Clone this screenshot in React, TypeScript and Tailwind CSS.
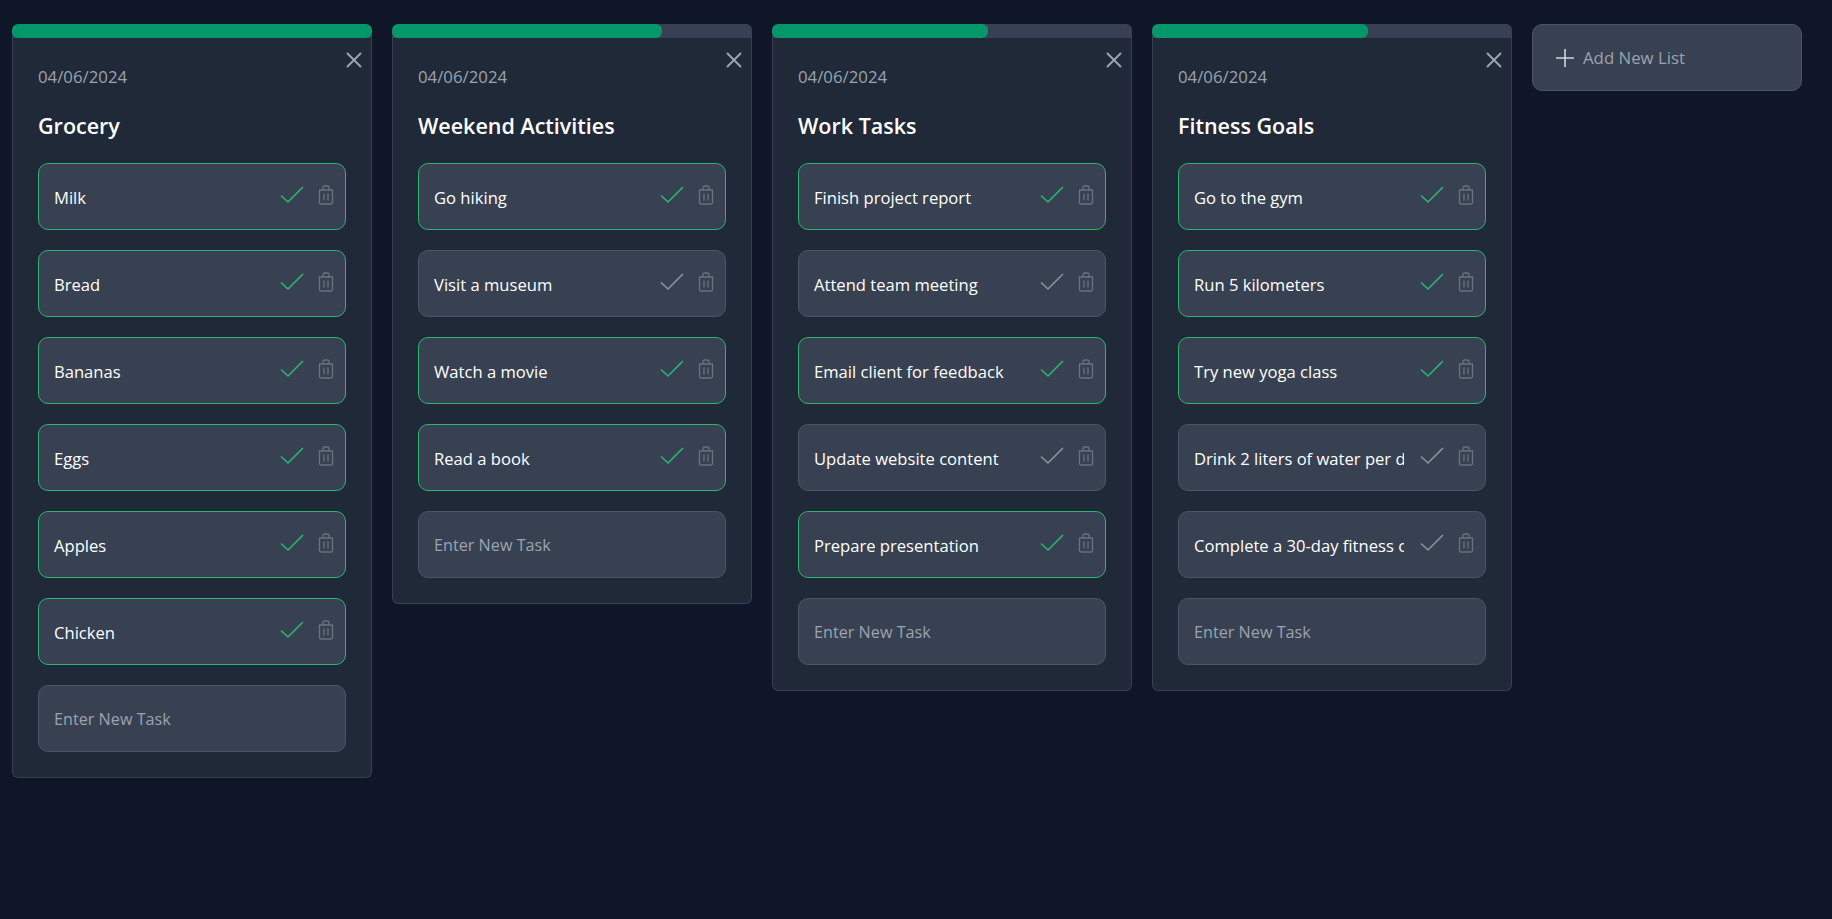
import { useState } from 'react'

type Task = { text: string; done: boolean }
type List = { title: string; progress: number; tasks: Task[] }

const lists: List[] = [
  {
    title: 'Grocery',
    progress: 100,
    tasks: [
      { text: 'Milk', done: true },
      { text: 'Bread', done: true },
      { text: 'Bananas', done: true },
      { text: 'Eggs', done: true },
      { text: 'Apples', done: true },
      { text: 'Chicken', done: true },
    ],
  },
  {
    title: 'Weekend Activities',
    progress: 75,
    tasks: [
      { text: 'Go hiking', done: true },
      { text: 'Visit a museum', done: false },
      { text: 'Watch a movie', done: true },
      { text: 'Read a book', done: true },
    ],
  },
  {
    title: 'Work Tasks',
    progress: 60,
    tasks: [
      { text: 'Finish project report', done: true },
      { text: 'Attend team meeting', done: false },
      { text: 'Email client for feedback', done: true },
      { text: 'Update website content', done: false },
      { text: 'Prepare presentation', done: true },
    ],
  },
  {
    title: 'Fitness Goals',
    progress: 60,
    tasks: [
      { text: 'Go to the gym', done: true },
      { text: 'Run 5 kilometers', done: true },
      { text: 'Try new yoga class', done: true },
      { text: 'Drink 2 liters of water per day', done: false },
      { text: 'Complete a 30-day fitness challenge', done: false },
    ],
  },
]

function CheckIcon({ done }: { done: boolean }) {
  return (
    <svg
      className={`w-[24px] h-[18px] shrink-0 ${done ? 'text-[#2bb673]' : 'text-[#8b93a0]'}`}
      viewBox="0 0 24 18"
      fill="none"
      stroke="currentColor"
      strokeWidth={1.6}
    >
      <path d="M1 9.500 L8 16 L23 1" />
    </svg>
  )
}

function TrashIcon() {
  return (
    <svg className="w-[16px] h-[20px] shrink-0 text-[#6b7280] ml-[14px]" viewBox="0 0 16 20" fill="none" stroke="currentColor" strokeWidth={1.3}>
      <path d="M1 5h14M5 5V2.500a1.500 1.500 0 0 1 1.500-1.500h3A1.500 1.500 0 0 1 11 2.500V5" />
      <path d="M1.500 5v12.500A1.500 1.500 0 0 0 3 19h10a1.500 1.500 0 0 0 1.500-1.500V5" />
      <path d="M6 8.500v7M10 8.500v7" />
    </svg>
  )
}

function TaskRow({ task }: { task: Task }) {
  return (
    <div
      className={`flex items-center h-[67px] pl-[15px] pr-[11px] rounded-[10px] border bg-[#374151] ${
        task.done ? 'border-[#2bb673]' : 'border-[#4b5563]'
      }`}
    >
      <input
        readOnly
        value={task.text}
        className="w-[210px] shrink-0 bg-transparent outline-none text-white text-[16.600px] mt-[3px]"
      />
      <div className="ml-[16px] flex items-center -mt-[4px]">
        <CheckIcon done={task.done} />
        <TrashIcon />
      </div>
    </div>
  )
}

function ListCard({ list }: { list: List }) {
  const [draft, setDraft] = useState('')
  return (
    <section className="relative w-[360px] shrink-0 rounded-md bg-[#1f2937] overflow-hidden">
      <div className="h-[14px] bg-[#374151]">
        <div className="h-full bg-[#059669] rounded-md" style={{ width: `${list.progress}%` }} />
      </div>
      <div className="border border-t-0 border-[#374151] rounded-b-md px-[25px] pt-[27px] pb-[25px]">
        <button className="absolute top-[26px] right-[8px] text-[#9ca3af]">
          <svg className="w-[20px] h-[20px]" viewBox="0 0 20 20" fill="none" stroke="currentColor" strokeWidth={2}>
            <path d="M3 3l14 14M17 3L3 17" />
          </svg>
        </button>
        <p className="text-[#9ca3af] text-[16.800px] leading-6">04/06/2024</p>
        <h2 className="mt-[23px] text-white text-[21.500px] font-semibold leading-7">{list.title}</h2>
        <div className="mt-[23px] flex flex-col gap-5">
          {list.tasks.map(task => (
            <TaskRow key={task.text} task={task} />
          ))}
          <div className="flex items-center h-[67px] px-[15px] rounded-[10px] border border-[#4b5563] bg-[#374151]">
            <input
              value={draft}
              onChange={e => setDraft(e.target.value)}
              placeholder="Enter New Task"
              className="w-full bg-transparent outline-none text-white text-[16.200px] mt-[2px] placeholder:text-[#9ca3af]"
            />
          </div>
        </div>
      </div>
    </section>
  )
}

export default function App() {
  return (
    <div className="min-h-screen bg-[#0f1628] font-['Open_Sans',sans-serif] flex items-start gap-5 pl-3 pt-6">
      {lists.map(list => (
        <ListCard key={list.title} list={list} />
      ))}
      <button className="w-[270px] h-[67px] shrink-0 flex items-center gap-2 pl-[22px] rounded-[10px] border border-[#4b5563] bg-[#374151] text-[#9ca3af] text-[16.800px]">
        <svg className="w-[20px] h-[20px] text-[#d1d5db]" viewBox="0 0 20 20" fill="none" stroke="currentColor" strokeWidth={1.600}>
          <path d="M10 1v18M1 10h18" />
        </svg>
        <span className="mt-[1px]">Add New List</span>
      </button>
    </div>
  )
}
